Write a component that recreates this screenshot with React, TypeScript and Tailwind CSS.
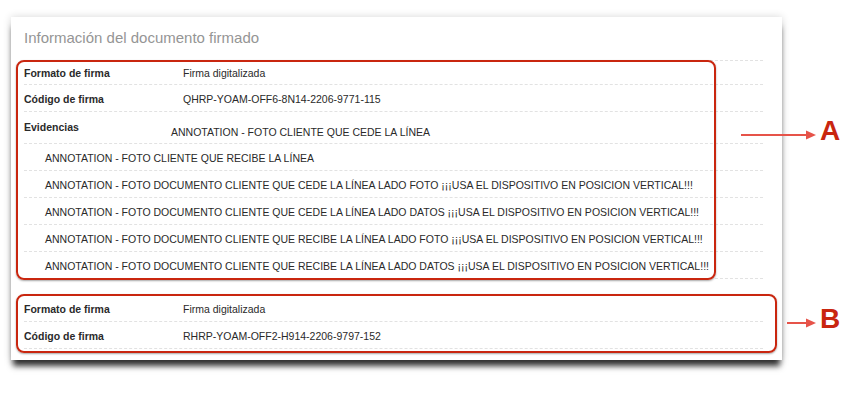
import React from "react";

const font = { fontFamily: '"Liberation Sans", Arial, Helvetica, sans-serif' };

function Row({ label, value, h }: { label: string; value: string; h: string }) {
  return (
    <div className={`flex items-center pt-[3px] border-b border-dashed border-[#e2e2e2] ${h}`}>
      <div className="w-[159px] shrink-0 text-[10.5px] font-bold text-[#2a2a2a]">{label}</div>
      <div className="text-[10.5px] text-[#2a2a2a]">{value}</div>
    </div>
  );
}

const evid = [
  "ANNOTATION - FOTO CLIENTE QUE RECIBE LA LÍNEA",
  "ANNOTATION - FOTO DOCUMENTO CLIENTE QUE CEDE LA LÍNEA LADO FOTO ¡¡¡USA EL DISPOSITIVO EN POSICION VERTICAL!!!",
  "ANNOTATION - FOTO DOCUMENTO CLIENTE QUE CEDE LA LÍNEA LADO DATOS ¡¡¡USA EL DISPOSITIVO EN POSICION VERTICAL!!!",
  "ANNOTATION - FOTO DOCUMENTO CLIENTE QUE RECIBE LA LÍNEA LADO FOTO ¡¡¡USA EL DISPOSITIVO EN POSICION VERTICAL!!!",
  "ANNOTATION - FOTO DOCUMENTO CLIENTE QUE RECIBE LA LÍNEA LADO DATOS ¡¡¡USA EL DISPOSITIVO EN POSICION VERTICAL!!!",
];

function Arrow({ x1, x2, y }: { x1: number; x2: number; y: number }) {
  return (
    <svg
      className="absolute"
      style={{ left: x1, top: y - 6, width: x2 - x1, height: 12 }}
      viewBox={`0 0 ${x2 - x1} 12`}
    >
      <line x1="0" y1="6" x2={x2 - x1 - 8} y2="6" stroke="#e65349" strokeWidth="2" />
      <polygon points={`${x2 - x1 - 10},1.5 ${x2 - x1},6 ${x2 - x1 - 10},10.5`} fill="#e65349" />
    </svg>
  );
}

export default function App() {
  return (
    <div className="relative w-[860px] h-[407px] bg-white overflow-hidden" style={font}>
      <div className="relative ml-[11px] mt-[17px] w-[771px] bg-white pl-[13px] pr-[19px] pb-[11px] shadow-[0_8px_6px_-2px_rgba(0,0,0,0.8),0_0_8px_rgba(0,0,0,0.16)]">
        <div className="h-[44px] border-b border-dashed border-[#e2e2e2] pt-[12px]">
          <div className="text-[15px] leading-[18px] text-[#959595]">Información del documento firmado</div>
        </div>
        <Row label="Formato de firma" value="Firma digitalizada" h="h-[24px]" />
        <Row label="Código de firma" value="QHRP-YOAM-OFF6-8N14-2206-9771-115" h="h-[27px]" />
        <div className="flex h-[32px] border-b border-dashed border-[#e2e2e2]">
          <div className="w-[147px] shrink-0 pt-[9px] text-[10.5px] leading-[13px] font-bold text-[#2a2a2a]">Evidencias</div>
          <div className="pt-[14px] text-[10.5px] leading-[13px] text-[#2a2a2a]">ANNOTATION - FOTO CLIENTE QUE CEDE LA LÍNEA</div>
        </div>
        {evid.map((e) => (
          <div key={e} className="flex h-[27px] items-center pt-[3px] border-b border-dashed border-[#e2e2e2] pl-[21px] text-[10.5px] text-[#2a2a2a]">
            {e}
          </div>
        ))}
        <div className="mt-[16px]">
          <Row label="Formato de firma" value="Firma digitalizada" h="h-[27px]" />
          <Row label="Código de firma" value="RHRP-YOAM-OFF2-H914-2206-9797-152" h="h-[27px]" />
        </div>

        <div className="absolute left-[5px] top-[43px] w-[700px] h-[220px] rounded-[8px] border-[2.5px] border-[#c9260f] shadow-[0_1px_2px_rgba(0,0,0,0.35)]" />
        <div className="absolute left-[5px] top-[277px] w-[761px] h-[59px] rounded-[8px] border-[2.5px] border-[#c9260f] shadow-[0_1px_2px_rgba(0,0,0,0.35)]" />
      </div>

      <Arrow x1={741} x2={816} y={135} />
      <div className="absolute left-[820px] top-[115px] text-[28px] leading-[32px] font-bold text-[#c9260f]">A</div>
      <Arrow x1={787} x2={816} y={323} />
      <div className="absolute left-[820px] top-[303px] text-[28px] leading-[32px] font-bold text-[#c9260f]">B</div>
    </div>
  );
}
